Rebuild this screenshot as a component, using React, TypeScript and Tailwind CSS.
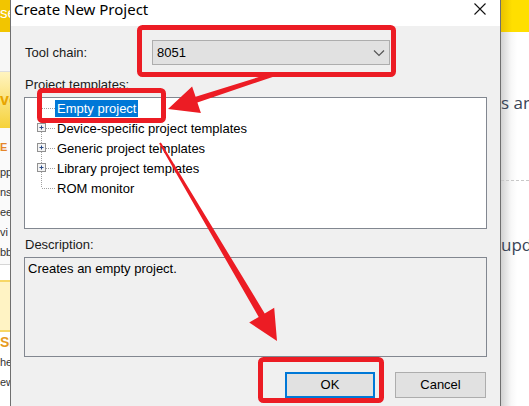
import React from "react";

const TREE_ROWS = [
  { label: "Empty project", plus: false, selected: true },
  { label: "Device-specific project templates", plus: true },
  { label: "Generic project templates", plus: true },
  { label: "Library project templates", plus: true },
  { label: "ROM monitor", plus: false },
];

function TreeLines() {
  return (
    <svg className="absolute left-0 top-0" width="40" height="110" viewBox="0 0 40 110">
      <path d="M16.5 10 V90" stroke="#a0a0a0" strokeDasharray="1 1" />
      {TREE_ROWS.map((r, i) => (
        <path key={i} d={`M17 ${10 + i * 20 + 0.5} H30`} stroke="#a0a0a0" strokeDasharray="1 1" />
      ))}
      {TREE_ROWS.map((r, i) =>
        r.plus ? (
          <g key={`p${i}`}>
            <rect x="12.5" y={10 + i * 20 - 4.5} width="8" height="8" fill="#f4f4f4" stroke="#919191" />
            <path d={`M14.5 ${10 + i * 20 - 0.5} H18.5 M16.5 ${10 + i * 20 - 2.5} V${10 + i * 20 + 1.5}`} stroke="#2b4a86" />
          </g>
        ) : null
      )}
    </svg>
  );
}

export default function App() {
  return (
    <div
      className="relative w-[529px] h-[406px] overflow-hidden flex bg-white text-[13px] text-black"
      style={{ fontFamily: '"Liberation Sans", Arial, sans-serif' }}
    >
      {/* Left: window behind, cut off */}
      <div className="w-[10px] shrink-0 flex flex-col overflow-hidden whitespace-nowrap text-[11px] leading-[20px]">
        <div className="h-[32px] shrink-0 bg-[#f2c500] text-white text-[15px] pt-[3px]">se</div>
        <div className="h-[40px] shrink-0 bg-[#f7f7f7] border-b border-[#dedede]" />
        <div className="h-[56px] shrink-0 bg-[linear-gradient(#fff4c0,#f6d23a)] text-[#e8a400] text-[16px] font-bold pt-[18px]">vo</div>
        <div className="h-[32px] shrink-0 bg-[#fafafa] text-[#e5862a] font-bold pt-[9px]">E P</div>
        <div className="h-[104px] shrink-0 bg-[#fafafa] text-[#333] pt-[2px]">
          <div>pp</div>
          <div>ns</div>
          <div>ee</div>
          <div>vi</div>
          <div>bb</div>
        </div>
        <div className="h-[16px] shrink-0 border-t border-[#d6d6d6] bg-white" />
        <div className="h-[52px] shrink-0 bg-[#fff3c4] border-y-2 border-[#f7d766]" />
        <div className="text-[#e69a20] font-bold text-[14px]">SE</div>
        <div className="text-[#333]">he</div>
        <div className="text-[#333]">ew</div>
      </div>

      {/* Dialog */}
      <div className="w-[491px] shrink-0 flex flex-col bg-[#f0f0f0] border-x border-[#6f6f6f]">
        <div className="h-[26px] bg-white flex items-start justify-between pl-[3px] pr-[14px]">
          <span className="text-[15px] leading-[18px] text-black" style={{ fontFamily: '"Noto Sans", sans-serif' }}>
            Create New Project
          </span>
          <svg width="12" height="12" viewBox="0 0 12 12" className="mt-[3px]">
            <path d="M0.5 0.5 L11.5 11.5 M11.5 0.5 L0.5 11.5" stroke="#111" strokeWidth="1.1" />
          </svg>
        </div>

        <div className="flex items-center mt-[14px] h-[25px] pl-[14px]">
          <span className="w-[127px] text-[#1a1a1a]">Tool chain:</span>
          <div className="w-[238px] h-[25px] bg-[#e1e1e1] border border-[#adadad] flex items-center justify-between pl-[4px] pr-[4px]">
            <span>8051</span>
            <svg width="12" height="8" viewBox="0 0 12 8">
              <path d="M1 1.5 L6 6.5 L11 1.5" fill="none" stroke="#555" strokeWidth="1.2" />
            </svg>
          </div>
        </div>

        <div className="mt-[12px] pl-[14px] leading-[16px] text-[#1a1a1a]">Project templates:</div>

        <div className="relative mt-[4px] ml-[13px] w-[463px] h-[132px] bg-white border border-[#828790]">
          <TreeLines />
          {TREE_ROWS.map((r) => (
            <div key={r.label} className="h-[20px] flex items-center pl-[30px]">
              <span
                className={
                  r.selected
                    ? "px-[2px] leading-[17px] bg-[#0078d7] text-white"
                    : "px-[2px] leading-[17px]"
                }
              >
                {r.label}
              </span>
            </div>
          ))}
        </div>

        <div className="mt-[8px] pl-[14px] leading-[16px] text-[#1a1a1a]">Description:</div>

        <div className="mt-[4px] ml-[13px] w-[463px] h-[100px] border border-[#828790] px-[3px] pt-[3px] leading-[16px]">
          Creates an empty project.
        </div>

        <div className="mt-[15px] flex justify-end gap-[20px] pr-[14px]">
          <button className="w-[90px] h-[26px] bg-[#e1e1e1] border-2 border-[#0078d7] text-[13px]">OK</button>
          <button className="w-[91px] h-[26px] bg-[#e1e1e1] border border-[#adadad] text-[13px]">Cancel</button>
        </div>
      </div>

      {/* Right: window behind */}
      <div className="flex-1 flex flex-col overflow-hidden whitespace-nowrap">
        <div className="h-[32px] shrink-0 bg-[linear-gradient(to_right,#e9c200,#ffdf00_40%)]" />
        <div className="flex-1 bg-[linear-gradient(to_right,#d2d2d2,#f7f7f7_10px,#ffffff_16px)] text-[17px] leading-[20px] text-[#3a4456]" style={{ fontFamily: '"Open Sans", sans-serif' }}>
          <div className="mt-[61px]">s an</div>
          <div className="mt-[67px] border-t border-dashed border-[#c8c8c8]" />
          <div className="mt-[54px]">upda</div>
        </div>
      </div>

      {/* Red annotations drawn over the screenshot */}
      <svg className="absolute inset-0 pointer-events-none" width="529" height="406" viewBox="0 0 529 406">
        <g fill="none" stroke="#ec1c24" strokeWidth="5" strokeLinejoin="round">
          <rect x="139.5" y="27.5" width="254" height="47" rx="3" />
          <rect x="39.5" y="90.5" width="124" height="30" rx="3" />
          <rect x="260.5" y="359.5" width="121" height="41" rx="3" />
        </g>
        <polygon
          fill="#ec1c24"
          points="271.4,73.1 195.6,96.8 192.1,86.4 168,109 200.9,113 197.4,102.6 272.6,76.9"
        />
        <polygon
          fill="#ec1c24"
          points="160.9,142.5 264.7,313.4 274.2,307.8 277,341 249.2,322.6 258.7,317 159.1,143.5"
        />
      </svg>
    </div>
  );
}
